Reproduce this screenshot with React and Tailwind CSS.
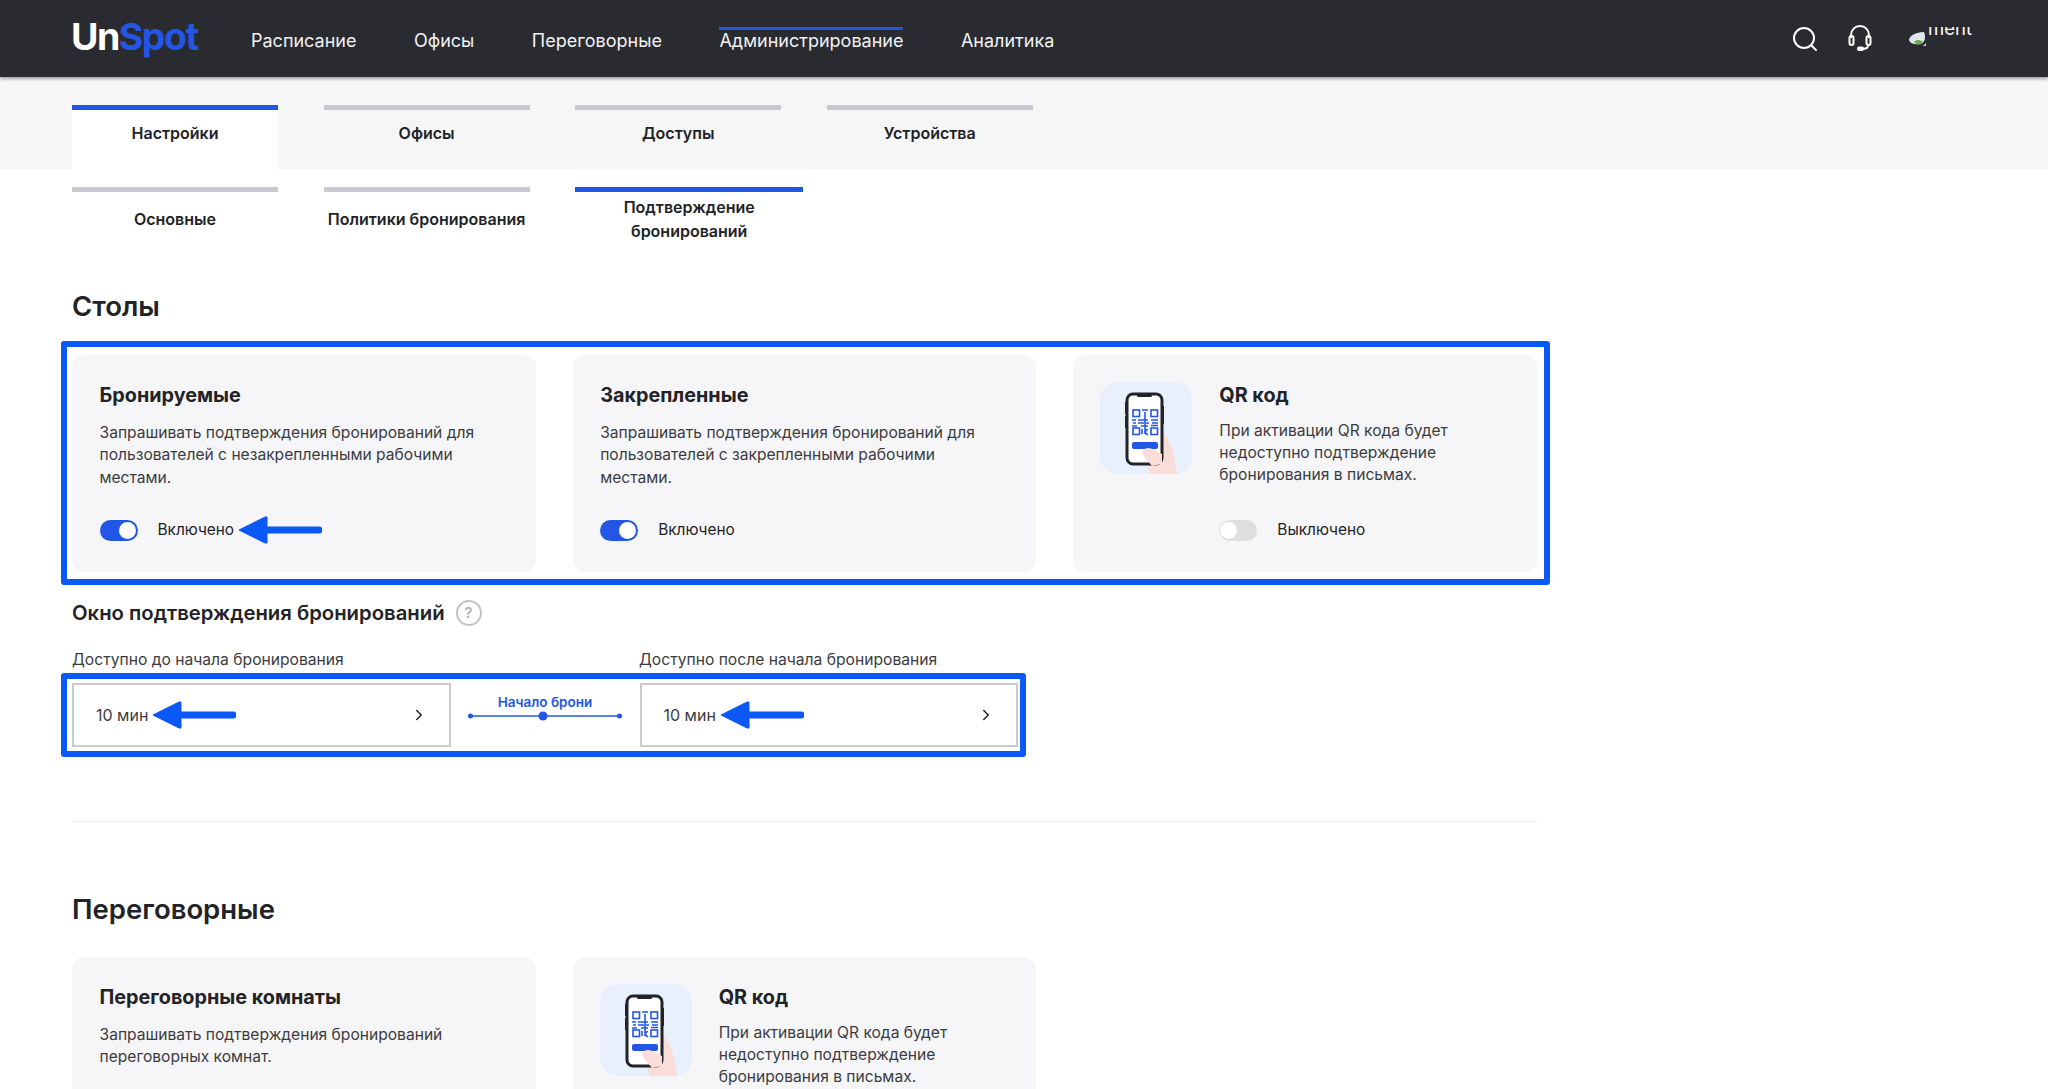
import React from 'react';
import { ChevronRight } from 'lucide-react';

const NAV = ['Расписание', 'Офисы', 'Переговорные', 'Администрирование', 'Аналитика'];
const TABS = ['Настройки', 'Офисы', 'Доступы', 'Устройства'];

const Arrow = ({ className }) => (
    <svg width="84" height="28" viewBox="0 0 84 28" className={className}>
        <path d="M1 14 L27 1 L29 1 L29 27 L27 27 Z" fill="#0a58f5" stroke="#0a58f5" strokeWidth="1" strokeLinejoin="round" />
        <path d="M28 14 H81" stroke="#0a58f5" strokeWidth="7" strokeLinecap="round" />
    </svg>
);

const Toggle = ({ on }) => (
    <span className={`flex h-[21px] w-[38px] items-center rounded-full ${on ? 'justify-end bg-[#2456e6] pr-[2px]' : 'justify-start bg-[#dedfe1] pl-[1px]'}`}>
        <span className="h-[17px] w-[17px] rounded-full bg-white" />
    </span>
);

const Status = ({ on, arrow }) => (
    <div className="mt-auto flex h-6 items-center">
        <Toggle on={on} />
        <span className="ml-[20px] text-[15.4px] leading-6 text-[#222327]">{on ? 'Включено' : 'Выключено'}</span>
        {arrow && <Arrow className="ml-[4px] shrink-0" />}
    </div>
);

const QrArt = () => (
    <svg width="92" height="92" viewBox="0 0 92 92" className="shrink-0">
        <rect width="92" height="92" rx="18" fill="#e8f0fd" />
        <path d="M62 50 C68 56 72 66 74 74 L77 92 H50 L46 82 L58 70 Z" fill="#fadcd8" />
        <rect x="25" y="20" width="2" height="12" fill="#222327" />
        <rect x="25" y="34" width="2" height="12" fill="#222327" />
        <rect x="62" y="24" width="2" height="18" fill="#222327" />
        <rect x="27" y="12" width="35" height="70" rx="6" fill="#fff" stroke="#222327" strokeWidth="3" />
        <rect x="37" y="12" width="15" height="3" rx="1.5" fill="#222327" />
        <g fill="none" stroke="#2456e6" strokeWidth="1.6">
            <rect x="33" y="28" width="6.5" height="6.5" />
            <rect x="51" y="28" width="6.5" height="6.5" />
            <rect x="33" y="46" width="6.5" height="6.5" />
            <rect x="51" y="46" width="6.5" height="6.5" />
            <path d="M42 28 h6 M45 30 v6 M32 38 h4 M38 38 h10 M51 38 h7 M33 41 h3 M38 41 h6 M46 41 h3 M52 41 h6 M32 44 h5 M41 44 h7 M51 43.5 h7 M45 36 v16 M42 47 v5 M48 47.5 a2.5 2.5 0 1 0 0.1 5" />
        </g>
        <rect x="32" y="60" width="26" height="7" rx="2" fill="#2456e6" />
        <path d="M42 70 C44 65 50 65 54 68 L62 72 L62 82 L52 84 C47 78 43 74 42 70 Z" fill="#fadcd8" />
    </svg>
);

const TextCard = ({ title, children, status }) => (
    <div className="flex h-[217px] flex-col rounded-xl bg-[#f6f6f8] px-[27.5px] pt-7 pb-[30px]">
        <h3 className="text-[19.8px] leading-6 font-bold text-[#222327]">{title}</h3>
        <p className="mt-[15px] max-w-[390px] text-[15.6px] leading-[22.4px] text-[#3b3c40]">{children}</p>
        {status}
    </div>
);

const QrCard = ({ status }) => (
    <div className="flex h-[217px] gap-[27px] rounded-xl bg-[#f6f6f8] pt-[27px] pr-7 pb-[30px] pl-[27px]">
        <QrArt />
        <div className="flex flex-1 flex-col pt-px">
            <h3 className="text-[19.8px] leading-6 font-bold text-[#222327]">QR код</h3>
            <p className="mt-[12.5px] text-[15.6px] leading-[22.4px] text-[#3b3c40]">
                При активации QR кода будет недоступно подтверждение бронирования в письмах.
            </p>
            {status}
        </div>
    </div>
);

const Select = () => (
    <div className="flex h-16 w-[378.5px] shrink-0 items-center border-2 border-[#cbcbcd] bg-white pr-[21px] pl-[22px]">
        <span className="text-[16px] text-[#3b3c40]">10 мин</span>
        <Arrow className="ml-[4px]" />
        <ChevronRight className="ml-auto h-[18px] w-[18px] text-[#222327]" strokeWidth={2} />
    </div>
);

const App = () => (
    <div className="h-[1089px] overflow-hidden bg-white font-[Inter,sans-serif] text-[#222327]">
        <header className="relative flex h-[77px] bg-[#2a2b30] pl-[71px] shadow-[0_2px_3px_rgba(0,0,0,0.35)]">
            <div className="mt-[15px] w-[180px] text-[37.5px] leading-[44px] font-bold tracking-[-1.5px] text-white">
                Un<span className="text-[#2456e6]">Spot</span>
            </div>
            <nav className="flex gap-[57.5px]">
                {NAV.map((item) => (
                    <a key={item} className={`mt-[27px] h-[33px] border-t-[3px] text-[18px] leading-5 text-[#f2f2f4] ${item === 'Администрирование' ? 'border-[#2456e6]' : 'border-transparent'}`}>
                        <span className="block pt-px">{item}</span>
                    </a>
                ))}
            </nav>
            <div className="ml-auto flex items-start pr-[76px]">
                <svg width="26" height="26" viewBox="0 0 26 26" fill="none" stroke="#fff" strokeWidth="2" className="mt-[26px]">
                    <circle cx="12" cy="12" r="10" />
                    <path d="M19.5 19.5 L24 24" strokeLinecap="round" />
                </svg>
                <svg width="24" height="26" viewBox="0 0 24 26" fill="none" stroke="#fff" strokeWidth="2" className="mt-[25px] ml-[30px]">
                    <path d="M3 13 V10 a9 9 0 0 1 18 0 V13" />
                    <rect x="1.5" y="11" width="4" height="9" rx="2" />
                    <rect x="18.5" y="11" width="4" height="9" rx="2" />
                    <path d="M20.5 20 C20 23 18 24 14 24" />
                    <rect x="10" y="22.5" width="5" height="2.5" rx="1" fill="#fff" />
                </svg>
                <svg width="20" height="16" viewBox="0 0 20 16" className="mt-[31px] ml-[36px]">
                    <path d="M1 9 C1 5 8 1 16 1 C18 6 17 11 13 13 C8 14 2 13 1 9 Z" fill="#dfe6ee" />
                    <path d="M6 11 C9 8 13 9 15 11 L13 13 C10 14 8 13 6 11 Z" fill="#6aa84f" />
                    <path d="M15 15 L18 12 L18 15 Z" fill="#cfd3d8" />
                </svg>
                <div className="mt-[27px] h-[8px] overflow-hidden">
                    <span className="block -translate-y-[9px] text-[18.5px] leading-5 text-white">ment</span>
                </div>
            </div>
        </header>

        <div className="flex h-[92px] gap-[45.6px] bg-[#f6f6f7] px-[72px] pt-7">
            {TABS.map((tab, i) => (
                <button key={tab} className={`flex h-[64px] w-[206px] justify-center border-t-[5px] pt-[12px] text-[16px] leading-[22px] font-semibold ${i === 0 ? 'border-[#2456e6] bg-white' : 'border-[#c9c9cf]'}`}>
                    {tab}
                </button>
            ))}
        </div>

        <main className="px-[72px]">
            <div className="mt-[18px] flex gap-[45.6px]">
                <button className="flex h-[59px] w-[206px] items-center justify-center border-t-[5px] border-[#c9c9cf] text-[16px] leading-6 font-semibold">Основные</button>
                <button className="flex h-[59px] w-[206px] items-center justify-center border-t-[5px] border-[#c9c9cf] text-[16px] leading-6 font-semibold">Политики бронирования</button>
                <button className="flex h-[59px] w-[228px] items-center justify-center border-t-[5px] border-[#2456e6] text-[16px] leading-6 font-semibold">Подтверждение<br />бронирований</button>
            </div>

            <h2 className="mt-[42px] mb-[17px] text-[27.5px] leading-9 font-semibold">Столы</h2>

            <div className="-ml-[11px] w-[1489px] rounded-[3px] border-[6px] border-[#0a58f5] pt-2 pr-[7px] pb-[7px] pl-[5px]">
                <div className="grid grid-cols-3 gap-[37px]">
                    <TextCard title="Бронируемые" status={<Status on arrow />}>
                        Запрашивать подтверждения бронирований для пользователей с незакрепленными рабочими местами.
                    </TextCard>
                    <TextCard title="Закрепленные" status={<Status on />}>
                        Запрашивать подтверждения бронирований для пользователей с закрепленными рабочими местами.
                    </TextCard>
                    <QrCard status={<Status on={false} />} />
                </div>
            </div>

            <div className="mt-[14px] flex h-7 items-center gap-[11px]">
                <h3 className="text-[20.3px] leading-7 font-semibold">Окно подтверждения бронирований</h3>
                <span className="flex h-[26px] w-[26px] items-center justify-center rounded-full border-2 border-[#c4c4c6] text-[15px] font-medium text-[#a8a8aa]">?</span>
            </div>

            <div className="mt-[22px] flex text-[15.65px] leading-[22px] text-[#3b3c40]">
                <span className="w-[567px]">Доступно до начала бронирования</span>
                <span>Доступно после начала бронирования</span>
            </div>

            <div className="mt-[2px] -ml-[11px] flex w-[965px] rounded-[3px] border-[6px] border-[#0a58f5] py-1 pl-[5px]">
                <Select />
                <div className="flex w-[189px] shrink-0 flex-col items-center pt-[9px]">
                    <span className="text-[13.5px] leading-5 font-semibold text-[#2456e6]">Начало брони</span>
                    <svg width="154" height="10" viewBox="0 0 154 10" className="mt-[-1px]">
                        <path d="M2 5 H152" stroke="#2456e6" strokeWidth="1.5" />
                        <circle cx="2.5" cy="5" r="2.5" fill="#2456e6" />
                        <circle cx="75" cy="5" r="4.5" fill="#2456e6" />
                        <circle cx="151.5" cy="5" r="2.5" fill="#2456e6" />
                    </svg>
                </div>
                <Select />
            </div>

            <hr className="mt-[64px] w-[1465px] border-[#ececee]" />

            <h2 className="mt-[69px] text-[27.5px] leading-9 font-semibold">Переговорные</h2>

            <div className="mt-[30px] grid w-[1465px] grid-cols-3 gap-[37px]">
                <TextCard title="Переговорные комнаты">
                    Запрашивать подтверждения бронирований переговорных комнат.
                </TextCard>
                <QrCard />
            </div>
        </main>
    </div>
);

export default App;
